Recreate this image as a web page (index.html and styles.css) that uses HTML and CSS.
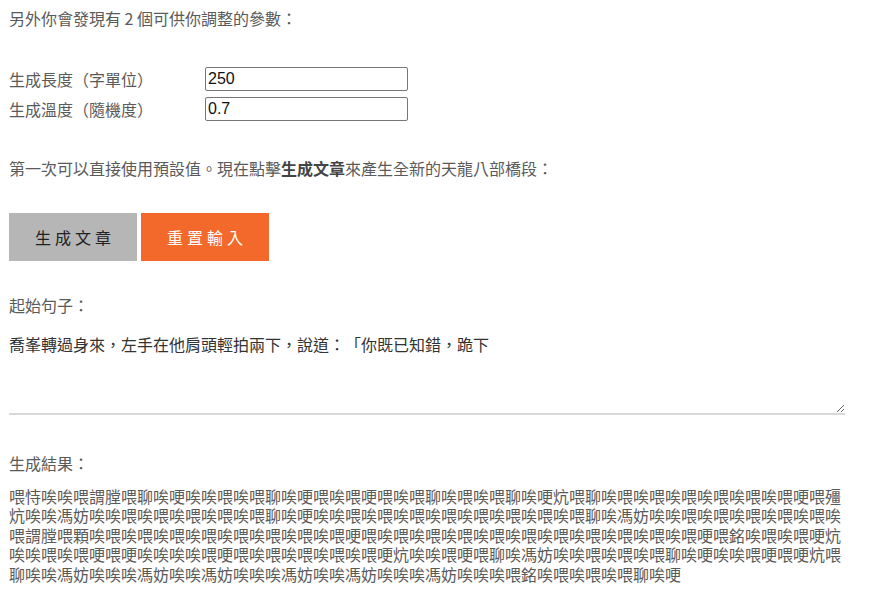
FILE: index.html
```html
<!DOCTYPE html>
<html lang="zh-Hant">
<head>
  <meta charset="UTF-8">
  <meta name="viewport" content="width=device-width, initial-scale=1.0">
  <title>天龍八部 - 文章生成</title>
  <link rel="stylesheet" href="styles.css">
</head>
<body>
  <div class="container">
    <p class="intro">另外你會發現有 2 個可供你調整的參數：</p>

    <!-- Parameters -->
    <div class="params">
      <div class="param-row">
        <label for="length">生成長度（字單位）</label>
        <input type="text" id="length" name="length" value="250">
      </div>
      <div class="param-row">
        <label for="temperature">生成溫度（隨機度）</label>
        <input type="text" id="temperature" name="temperature" value="0.7">
      </div>
    </div>

    <p class="hint">第一次可以直接使用預設值。現在點擊<strong>生成文章</strong>來產生全新的天龍八部橋段：</p>

    <div class="actions">
      <button type="button" class="btn btn-generate">生成文章</button>
      <button type="button" class="btn btn-reset">重置輸入</button>
    </div>

    <!-- Seed sentence -->
    <p class="section-label">起始句子：</p>
    <textarea class="seed" id="seed">喬峯轉過身來，左手在他肩頭輕拍兩下，說道：「你既已知錯，跪下</textarea>

    <!-- Generated output -->
    <p class="section-label result-label">生成結果：</p>
    <p class="result" id="result">喂恃唉唉喂謂膛喂聊唉哽唉唉喂唉喂聊唉哽喂唉喂哽喂唉喂聊唉喂唉喂聊唉哽炕喂聊唉喂唉喂唉喂唉喂唉喂唉喂哽喂殭炕唉唉馮妨唉唉喂唉喂唉喂唉喂唉喂聊唉哽唉唉喂唉喂唉喂唉喂唉喂唉喂唉喂唉喂聊唉馮妨唉唉喂唉喂唉喂唉喂唉喂唉喂謂膛喂顆唉喂唉喂唉喂唉喂唉喂唉喂唉喂唉喂哽喂唉喂唉喂唉喂唉喂唉喂唉喂唉喂唉喂唉喂唉喂哽喂銘唉喂唉喂哽炕唉唉喂唉喂哽喂哽唉唉唉唉喂哽喂唉喂唉喂唉喂唉喂哽炕唉唉喂哽喂聊唉馮妨唉唉喂唉喂唉喂聊唉哽唉唉喂哽喂哽炕喂聊唉唉馮妨唉唉唉馮妨唉唉馮妨唉唉唉馮妨唉唉馮妨唉唉唉馮妨唉唉唉喂銘唉喂唉喂唉喂聊唉哽</p>
  </div>
</body>
</html>
```

FILE: styles.css
```css
/* Basic page styles */
body {
  font-family: "Noto Sans CJK TC", "Noto Sans", sans-serif;
  font-size: 16px;
  color: #5a5a5a;
  margin: 0;
  padding: 0;
  background-color: #fff;
  text-spacing-trim: space-all;
}

.container {
  width: 836px;
  padding: 8px 0 0 9px;
}

.container p {
  margin: 0;
  line-height: 20px;
}

.params {
  margin-top: 39px;
  display: flex;
  flex-direction: column;
  gap: 6px;
}

.param-row {
  display: flex;
  align-items: center;
  height: 24px;
}

.param-row label {
  width: 196px;
}

.param-row input {
  box-sizing: border-box;
  width: 203px;
  height: 24px;
  padding: 1px 2px;
  border: 1px solid #767676;
  border-radius: 2px;
  font-family: "Liberation Sans", Arial, sans-serif;
  font-size: 16px;
  color: #111;
}

.container .hint {
  margin-top: 37px;
}

.hint strong {
  color: #444;
  font-weight: 600;
}

.actions {
  margin-top: 35px;
  display: flex;
  gap: 4px;
}

.btn {
  width: 128px;
  height: 48px;
  border: none;
  font-family: "Noto Sans CJK TC", sans-serif;
  font-size: 16px;
  letter-spacing: 4px;
  padding: 0 0 0 4px;
  cursor: pointer;
}

.btn-generate {
  background-color: #b6b6b6;
  color: #222;
}

.btn-reset {
  background-color: #f2692b;
  color: #fff;
}

.container .section-label {
  margin-top: 34px;
}

.seed {
  display: block;
  box-sizing: border-box;
  width: 836px;
  height: 81px;
  margin-top: 19px;
  padding: 0;
  border: none;
  border-bottom: 2px solid #d8d8d8;
  font-family: "Noto Sans CJK TC", sans-serif;
  font-size: 16px;
  line-height: 20px;
  color: #333;
  outline: none;
  text-spacing-trim: space-all;
}

.container .result-label {
  margin-top: 38px;
}

.container .result {
  margin-top: 14px;
  line-height: 19.4px;
  word-break: break-all;
}
```
